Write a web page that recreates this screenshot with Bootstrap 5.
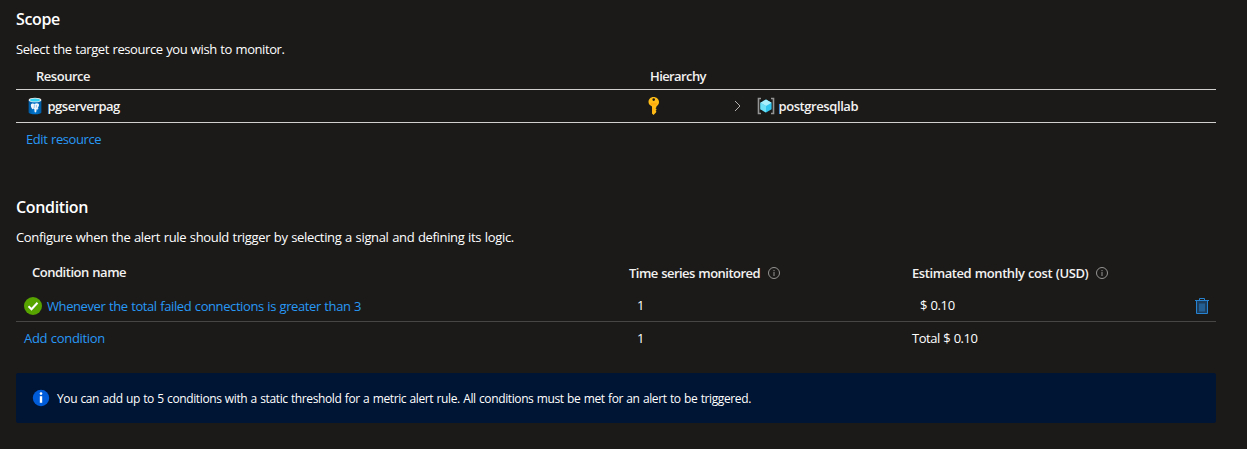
<!DOCTYPE html>
<html lang="en" data-bs-theme="dark">
<head>
<meta charset="utf-8">
<meta name="viewport" content="width=device-width, initial-scale=1">
<title>Alert rule</title>
<link href="https://cdn.jsdelivr.net/npm/bootstrap@5.3.0/dist/css/bootstrap.min.css" rel="stylesheet">
<style>
body{background:#1b1a19;color:#fff;font-family:"Segoe UI","Open Sans","Noto Sans",sans-serif;font-size:13px;line-height:20px;letter-spacing:-.41px;word-spacing:.6px;overflow:hidden}
.rule-page{width:1200px;margin-left:16px;padding-top:7px}
.section-title{font-size:16px;line-height:24px;font-weight:600;letter-spacing:-.35px;margin:0}
.rule-page a{color:#2899f5;text-decoration:none}
.head-text{font-weight:600;color:#f3f2f1;letter-spacing:-.48px}
.spaced{letter-spacing:-.34px}
.scope-grid{display:grid;grid-template-columns:630px 111px 1fr;align-items:center;border-bottom:1px solid #d2d0ce}
.scope-head{height:26px;margin-top:5px;padding-bottom:2px}
.scope-item{height:33px}
.cond-grid{display:grid;grid-template-columns:613px 283px 1fr;align-items:center}
.cond-head{height:33px;margin-top:9px}
.cond-item{height:33px;border-bottom:1px solid #484644}
.cond-total{height:32px}
.notice{height:50px;margin-top:19px;background:#001433;border-radius:2px;font-size:12px;letter-spacing:-.385px;padding-left:16px}
svg{display:block;flex:none}
</style>
</head>
<body>
<main class="rule-page">
  <section>
    <h2 class="section-title">Scope</h2>
    <p class="mb-0 pt-2">Select the target resource you wish to monitor.</p>
    <div class="scope-grid scope-head head-text">
      <div style="padding-left:20px">Resource</div>
      <div style="padding-left:4px;letter-spacing:-.6px">Hierarchy</div>
    </div>
    <div class="scope-grid scope-item head-text">
      <div class="d-flex align-items-center" style="padding-left:10px">
        <svg width="18" height="18" viewBox="0 0 18 18">
          <defs><linearGradient id="db"><stop stop-color="#005ba1"/><stop offset=".5" stop-color="#0078d4"/><stop offset="1" stop-color="#005ba1"/></linearGradient></defs>
          <path d="M2.600 3v12.200c0 1.200 2.900 2.100 6.400 2.100s6.400-.9 6.400-2.100V3z" fill="url(#db)"/>
          <ellipse cx="9" cy="3" rx="6.400" ry="2.300" fill="#e8e8e8"/>
          <ellipse cx="9" cy="3" rx="4.900" ry="1.500" fill="#32d4f5"/>
          <path d="M5.300 7c1.200-.8 2.400-.5 3.200 0 1.400-.9 3.400-1 4.300.1.700 1.100-.3 3.100-1.200 4.200l1 .3-.9.800-1.100-.1-.3 2.400-.7.700-1-.3-.3-3.200-.8-.3-.6.700C5.600 11.800 4.100 8.200 5.300 7z" fill="#f2f7fc"/>
          <path d="M8.500 7.500 8.100 11M10.400 8v2.500" stroke="#5aa0d8" stroke-width=".6" fill="none"/>
        </svg>
        <span style="margin-left:3.500px">pgserverpag</span>
      </div>
      <div>
        <svg width="16" height="18" viewBox="0 0 16 18">
          <path fill-rule="evenodd" d="M7.500 0C10.600 0 13 2.200 13 5.100c0 2-1 3.500-2.600 4.400v.8l-.9.900.9.900v.8l-.8.800.8.900-.4.900-2.500 2.500-1.500-1.600v-7C4.100 8.600 2.500 7.300 2.500 5.100 2.500 2.200 4.600 0 7.500 0zm.2 1.300a1.300 1.300 0 1 0 0 2.600 1.300 1.300 0 0 0 0-2.600z" fill="#ffbd16"/>
          <path d="M4.700 6.400h6M4.700 7.700h6M7 10.500v5" stroke="#ffa30b" stroke-width=".8" fill="none"/>
        </svg>
      </div>
      <div class="d-flex align-items-center" style="margin-left:-23px">
        <svg width="8" height="12" viewBox="0 0 8 12"><path d="m1 1 5 5-5 5" fill="none" stroke="#b3b0ad"/></svg>
        <svg style="margin-left:15px" width="18" height="18" viewBox="0 0 18 18">
          <path d="M4 1.500H1.500v15H4M14 1.500h2.500v15H14" fill="none" stroke="#949494" stroke-width="1.600"/>
          <path d="m9 2.500 5.600 3.200v6.600L9 15.500l-5.600-3.200V5.700z" fill="#32c5ee"/>
          <path d="m9 2.500 5.600 3.200L9 9 3.400 5.700z" fill="#a8effb"/>
          <path d="M3.400 5.700 9 9v6.500l-5.600-3.200z" fill="#6fe1f6"/>
        </svg>
        <span style="margin-left:3.500px;letter-spacing:-.42px">postgresqllab</span>
      </div>
    </div>
    <div style="padding:6px 0 0 10px"><a href="#">Edit resource</a></div>
  </section>
  <section style="margin-top:46px">
    <h2 class="section-title">Condition</h2>
    <p class="mb-0 pt-2 spaced">Configure when the alert rule should trigger by selecting a signal and defining its logic.</p>
    <div class="cond-grid cond-head head-text">
      <div style="padding:0 0 2px 16px">Condition name</div>
      <div class="d-flex align-items-center"><span style="letter-spacing:-.53px">Time series monitored</span>
        <svg style="margin-left:8px" width="12" height="12" viewBox="0 0 12 12"><circle cx="6" cy="6" r="5.500" fill="none" stroke="#979593"/><path d="M6 3v1.200M6 5v4" stroke="#979593"/></svg></div>
      <div class="d-flex align-items-center"><span style="letter-spacing:-.42px">Estimated monthly cost (USD)</span>
        <svg style="margin-left:8px" width="12" height="12" viewBox="0 0 12 12"><circle cx="6" cy="6" r="5.500" fill="none" stroke="#979593"/><path d="M6 3v1.200M6 5v4" stroke="#979593"/></svg></div>
    </div>
    <div class="cond-grid cond-item">
      <div class="d-flex align-items-center" style="padding:2px 0 0 8px">
        <svg width="18" height="18" viewBox="0 0 18 18"><circle cx="9" cy="9" r="9" fill="#57a300"/><path d="m4.500 9.300 3 3 6-6.500" fill="none" stroke="#fff" stroke-width="2"/></svg>
        <a href="#" style="margin-left:5px">Whenever the total failed connections is greater than 3</a>
      </div>
      <div class="ps-2">1</div>
      <div class="d-flex align-items-center justify-content-between" style="padding:0 7px 0 8px"><span>$ 0.10</span>
        <svg style="margin-top:2px" width="14" height="16" viewBox="0 0 14 16" fill="none"><path d="M1.500 3h11v12.500h-11z" fill="#1c3d5b"/><path d="M4 5.500h6v8H4z" fill="#235f93"/><path d="M0 2.500h14M4.500 2V.5h5V2M1.500 3v12.500h11V3" stroke="#2583d2"/></svg>
      </div>
    </div>
    <div class="cond-grid cond-total">
      <div class="ps-2" style="letter-spacing:-.32px"><a href="#">Add condition</a></div>
      <div class="ps-2">1</div>
      <div style="letter-spacing:-.48px">Total $ 0.10</div>
    </div>
    <div class="notice d-flex align-items-center">
      <svg width="18" height="18" viewBox="0 0 18 18"><circle cx="9" cy="9" r="8.200" fill="#015cda"/><circle cx="9" cy="4.600" r="1.300" fill="#fff"/><path d="M7.800 7.200h2.400v6.600H7.800z" fill="#fff"/></svg>
      <span style="margin-left:7px;padding-top:2px">You can add up to 5 conditions with a static threshold for a metric alert rule. All conditions must be met for an alert to be triggered.</span>
    </div>
  </section>
</main>
<script src="https://cdn.jsdelivr.net/npm/bootstrap@5.3.0/dist/js/bootstrap.bundle.min.js"></script>
</body>
</html>
